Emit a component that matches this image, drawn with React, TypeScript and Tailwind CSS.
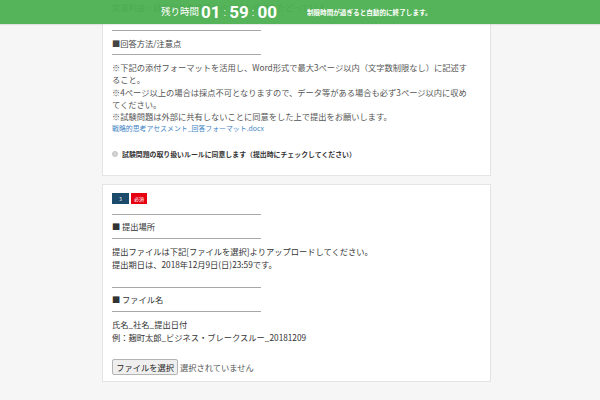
import React from 'react'

const jp = { fontFamily: '"Noto Sans CJK JP", "Noto Sans", sans-serif' }

function Rule({ className = '' }: { className?: string }) {
  return <div className={`w-[149px] h-px bg-[#a8a8a8] ${className}`} />
}

export default function App() {
  return (
    <div className="relative h-[400px] w-[600px] overflow-hidden bg-[#f6f6f6]" style={jp}>
      {/* timer bar */}
      <div className="absolute top-0 left-0 right-0 h-[24px] bg-[#4caf50]/95 shadow-[0_1px_1px_rgba(0,0,0,0.08)] flex items-center text-white z-10">
        <span className="ml-[161px] text-[9.5px] leading-none">残り時間</span>
        <span className="ml-[2px] flex items-center font-bold text-[17px] leading-none" style={{ fontFamily: 'Roboto, sans-serif' }}>
          01<span className="mx-[3px] text-[11px] font-normal opacity-90">:</span>59<span className="mx-[3px] text-[11px] font-normal opacity-90">:</span>00
        </span>
        <span className="ml-[30px] text-[6.6px] font-bold leading-none">制限時間が過ぎると自動的に終了します。</span>
      </div>

      <div className="pl-[102px] flex flex-col gap-[8px]">
        {/* card 1 */}
        <div className="w-[389px] bg-white border border-t-0 border-[#e4e4e4] pl-[9px] pr-[9px] pt-px pb-[15px] text-[8.25px] text-[#555]">
          <p className="leading-[12px]">営業利益・経常利益の推移から大幅な減少をたどっている</p>
          <Rule className="mt-[17px]" />
          <p className="mt-[6px] leading-[12px] text-[#444]">■回答方法/注意点</p>
          <Rule className="mt-[5px]" />
          <div className="mt-[6px] pr-[8px] leading-[12.25px]">
            <p>※下記の添付フォーマットを活用し、Word形式で最大3ページ以内（文字数制限なし）に記述すること。</p>
            <p>※4ページ以上の場合は採点不可となりますので、データ等がある場合も必ず3ページ以内に収めてください。</p>
            <p>※試験問題は外部に共有しないことに同意をした上で提出をお願いします。</p>
          </div>
          <a className="block text-[6.9px] leading-[12px] text-[#3f86c4]">戦略的思考アセスメント_回答フォーマット.docx</a>
          <div className="mt-[14px] h-[12px] flex items-center">
            <span className="w-[6px] h-[6px] rounded-full bg-[#d4d4d4] border border-[#c4c4c4]" />
            <span className="ml-[4px] text-[6.9px] font-bold text-[#333]">試験問題の取り扱いルールに同意します（提出時にチェックしてください）</span>
          </div>
        </div>

        {/* card 2 */}
        <div className="w-[389px] bg-white border border-[#e4e4e4] pl-[9px] pr-[9px] pt-[8px] pb-[6px] text-[8.25px] text-[#333]">
          <div className="flex gap-[2px]">
            <span className="w-[17px] h-[11px] bg-[#1b4a6b] text-white text-[5px] flex items-center justify-center">3</span>
            <span className="w-[16px] h-[11px] bg-[#e60012] text-white text-[5px] flex items-center justify-center">必須</span>
          </div>
          <Rule className="mt-[10px]" />
          <p className="mt-[5px] leading-[12px]">■ 提出場所</p>
          <Rule className="mt-[6px]" />
          <div className="mt-[6px] leading-[13px]">
            <p>提出ファイルは下記[ファイルを選択]よりアップロードしてください。</p>
            <p>提出期日は、2018年12月9日(日)23:59です。</p>
          </div>
          <Rule className="mt-[16px]" />
          <p className="mt-[5px] leading-[12px]">■ ファイル名</p>
          <Rule className="mt-[6px]" />
          <div className="mt-[6px] leading-[13px]">
            <p>氏名_社名_提出日付</p>
            <p>例：麹町太郎_ビジネス・ブレークスルー_20181209</p>
          </div>
          <div className="mt-[15px] flex items-center">
            <button className="h-[16px] w-[66px] bg-[#efefef] border border-[#b4b4b4] rounded-[2px] text-[8.25px] text-[#222] leading-none">ファイルを選択</button>
            <span className="ml-[2px] text-[#555]">選択されていません</span>
          </div>
        </div>
      </div>
    </div>
  )
}
